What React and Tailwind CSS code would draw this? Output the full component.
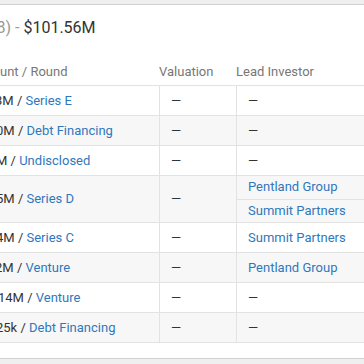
import React from 'react';

const rounds = [
  { amount: '3M', round: 'Series E', shift: 'ml-[-5px]', leads: [] },
  { amount: '0M', round: 'Debt Financing', shift: 'ml-[-4px]', leads: [] },
  { amount: 'M', round: 'Undisclosed', shift: 'ml-[-4px]', leads: [] },
  { amount: '5M', round: 'Series D', shift: 'ml-[-4px]', leads: ['Pentland Group', 'Summit Partners'] },
  { amount: '4M', round: 'Series C', shift: 'ml-[-4px]', leads: ['Summit Partners'] },
  { amount: '2M', round: 'Venture', shift: 'ml-[-5px]', leads: ['Pentland Group'] },
  { amount: '14M', round: 'Venture', shift: 'ml-[-2px]', leads: [] },
  { amount: '25k', round: 'Debt Financing', shift: 'ml-[-4px]', leads: [] },
];

const Dash = () => <span className="text-[#333]">—</span>;

const RoundRow = ({ item, index }) => {
  const striped = index % 2 === 1;
  const multi = item.leads.length > 1;
  return (
    <div
      className={`flex border-b border-[#e2e2e2] ${striped ? 'bg-[#f7f7f7]' : 'bg-white'} ${multi ? 'h-[47px]' : 'h-[30px]'}`}
    >
      {/* Amount / Round */}
      <div className="w-[159px] shrink-0 flex items-center overflow-hidden whitespace-nowrap">
        <span className={item.shift}>
          <span className="text-[#333]">{item.amount} / </span>
          <a className="text-[#2f78bd]">{item.round}</a>
        </span>
      </div>
      {/* Valuation */}
      <div className="w-[77px] shrink-0 flex items-center pl-[11px] border-l border-[#e2e2e2]">
        <Dash />
      </div>
      {/* Lead Investor */}
      <div className="flex-1 flex flex-col border-l border-[#e2e2e2]">
        {item.leads.length === 0 ? (
          <div className="flex-1 flex items-center pl-[11px]">
            <Dash />
          </div>
        ) : (
          item.leads.map((lead, i) => (
            <div
              key={lead}
              className={`flex-1 flex items-center pl-[11px] whitespace-nowrap ${i < item.leads.length - 1 ? 'border-b border-[#e2e2e2]' : ''}`}
            >
              <a className="text-[#2f78bd]">{lead}</a>
            </div>
          ))
        )}
      </div>
    </div>
  );
};

const App = () => {
  return (
    <div className="h-[364px] w-[364px] overflow-hidden bg-[#efefef] pt-1 font-['Roboto',sans-serif] text-[13px] leading-[18px]">
      <div className="bg-white border-t border-b border-[#d0d0d0]">
        {/* Title */}
        <div className="h-[46px] flex items-center overflow-hidden whitespace-nowrap">
          <div className="ml-[-9px] text-[16px]">
            <span className="text-[#999]">(8) - </span>
            <span className="text-[#333]">$101.56M</span>
          </div>
        </div>

        {/* Header */}
        <div className="h-[35px] flex items-end pb-1 border-b border-[#e2e2e2] text-[#777] whitespace-nowrap">
          <div className="w-[159px] shrink-0 overflow-hidden">
            <span>unt / Round</span>
          </div>
          <div className="w-[77px] shrink-0">Valuation</div>
          <div className="flex-1">Lead Investor</div>
        </div>

        {/* Rows */}
        <div>
          {rounds.map((item, index) => (
            <RoundRow key={index} item={item} index={index} />
          ))}
        </div>

        <div className="h-[15px]" />
      </div>
    </div>
  );
};

export default App;
